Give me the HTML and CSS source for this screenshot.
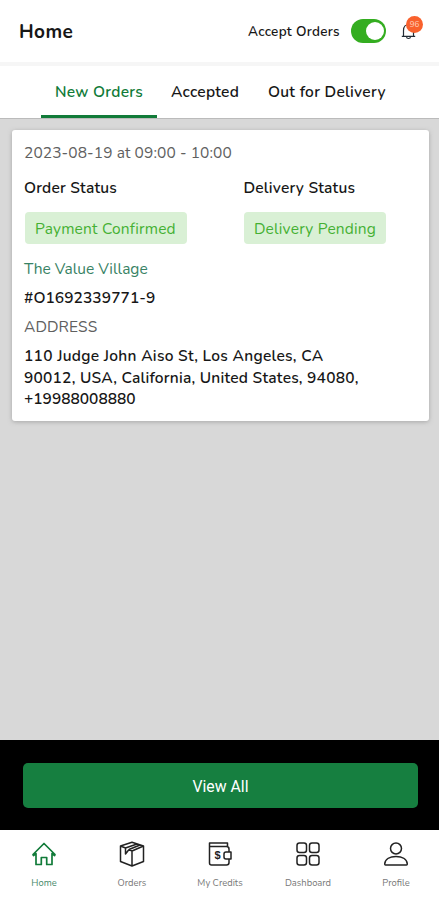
FILE: index.html
```
<!DOCTYPE html>
<html lang="en">
<head>
<meta charset="utf-8">
<meta name="viewport" content="width=device-width, initial-scale=1">
<title>Home</title>
<link rel="stylesheet" href="styles.css">
</head>
<body>
<header class="topbar">
  <h1 class="title">Home</h1>
  <span class="accept">Accept Orders</span>
  <span class="toggle"><span class="knob"></span></span>
  <span class="bell">
    <svg width="16" height="18" viewBox="0 0 16 18" fill="none" stroke="#222c35" stroke-width="1.2"><path d="M.8 14.300h13.400M2.500 14V8.500C2.500 4.500 4.800 2.500 8 2.500s4.500 2 4.500 6V14M5.500 14.700c.2 2.400 3.800 2.400 4 0"/></svg>
    <span class="badge">96</span>
  </span>
</header>
<nav class="tabs">
  <span class="tab tab-active">New Orders</span>
  <span class="tab t-accepted">Accepted</span>
  <span class="tab t-out">Out for Delivery</span>
</nav>
<main class="content">
  <article class="card">
    <div class="date">2023-08-19 at 09:00 - 10:00</div>
    <div class="statuses">
      <div><div class="label">Order Status</div><span class="chip c-payment">Payment Confirmed</span></div>
      <div><div class="label">Delivery Status</div><span class="chip c-pending">Delivery Pending</span></div>
    </div>
    <div class="store">The Value Village</div>
    <div class="number">#O1692339771-9</div>
    <div class="heading">ADDRESS</div>
    <div class="address"><span class="street">110 Judge John Aiso St, Los Angeles, CA</span><br><span class="region">90012, USA, California, United States, 94080,</span><br><span>+19988008880</span></div>
  </article>
</main>
<div class="action"><button class="view">View All</button></div>
<footer class="nav">
  <div class="item item-active">
    <svg width="26" height="26" viewBox="0 0 26 26"><path d="M5 12.500 2.500 14.500 2 13.500 13 2.500 24 13.500l-.5 1L21 12.500v11h-5.300v-7h-5.400v7H5z"/></svg>
    <span>Home</span>
  </div>
  <div class="item">
    <svg width="26" height="26" viewBox="0 0 26 26"><path d="M13 1.200 24.500 5v15.500L13 25 1.500 20.500V5zM1.500 5l5 2M10 8.500l3 1.500 11.500-5M13 10v15M6.500 7 18 3M10 8.500 21 4M6.500 7v6L10 8.500"/></svg>
    <span>Orders</span>
  </div>
  <div class="item">
    <svg width="26" height="26" viewBox="0 0 26 26"><path d="M20.500 5.500V2H2.500v20q0 2 2 2h15q2.500 0 2.500-2.500V18M2.500 5.500h17q2.500 0 2.500 2.500v3M24 11h-5q-2 0-2 2v3q0 2 2 2h5z"/><text x="7.500" y="18" class="dollar">$</text></svg>
    <span>My Credits</span>
  </div>
  <div class="item">
    <svg width="26" height="26" viewBox="0 0 26 26"><rect x="2" y="2" width="9.500" height="9.500" rx="2.500"/><rect x="14.500" y="2" width="9.500" height="9.500" rx="2.500"/><rect x="2" y="14.500" width="9.500" height="9.500" rx="2.500"/><rect x="14.500" y="14.500" width="9.500" height="9.500" rx="2.500"/></svg>
    <span>Dashboard</span>
  </div>
  <div class="item">
    <svg width="26" height="26" viewBox="0 0 26 26"><circle cx="13" cy="7.500" r="5.500"/><path d="M2.500 24q-.8 0-.8-1C2 18 7 15.500 13 15.500S24 18 24.300 23q0 1-.8 1z"/></svg>
    <span>Profile</span>
  </div>
</footer>
</body>
</html>
```
FILE: styles.css
```
* { box-sizing: border-box; }
body { margin: 0; width: 439px; height: 900px; overflow: hidden; display: flex; flex-direction: column; background: #d8d8d8; font-family: Nunito, Lato, "Noto Sans", sans-serif; font-size: 15.5px; color: #171717; white-space: nowrap; }
.topbar { height: 62px; flex: none; background: #fff; display: flex; align-items: center; padding-left: 19px; }
.title { margin: 2px 0 0; width: 229px; font-size: 19px; font-weight: 700; letter-spacing: .4px; }
.accept { width: 103px; font-size: 13.5px; font-weight: 600; letter-spacing: .3px; }
.toggle { width: 35px; height: 24px; border-radius: 12px; background: #34ad20; padding: 3px 2px; display: flex; justify-content: flex-end; }
.knob { width: 18px; height: 18px; border-radius: 50%; background: #fff; }
.bell { position: relative; margin: 0 0 0 15px; width: 16px; height: 18px; }
.bell svg { display: block; }
.badge { position: absolute; left: 5px; top: -6px; width: 17px; height: 17px; border-radius: 50%; background: #f9612d; color: #ffd0bd; font-size: 8px; line-height: 17px; text-align: center; }
.tabs { height: 57px; flex: none; background: #fff; border-top: 4px solid #f6f6f6; border-bottom: 1px solid #bbb; display: flex; padding-left: 41px; line-height: 51px; font-weight: 600; letter-spacing: .27px; }
.tab-active { width: 116px; padding-left: 14px; margin-right: 14px; color: #117b39; border-bottom: 3px solid #117b39; }
.t-accepted { width: 97px; }
.content { flex: 1; padding: 11px 10px 0 12px; }
.card { height: 291px; border-radius: 3px; background: #fff; box-shadow: 0 1px 4px #8889; padding: 13px 12px; }
.date, .heading { color: #606060; font-weight: 400; line-height: 20px; letter-spacing: .1px; }
.statuses { display: grid; grid-template-columns: 219.5px 1fr; margin-top: 15px; }
.label { font-weight: 600; line-height: 20px; margin-bottom: 14px; letter-spacing: .2px; }
.chip { display: block; height: 32px; line-height: 33px; border-radius: 4px; background: #d9f0d5; color: #45b033; padding-left: 10px; margin-left: 1px; letter-spacing: .2px; }
.c-payment { width: 162px; }
.c-pending { width: 142px; margin-left: .4px; }
.store { color: #388264; line-height: 20px; margin-top: 15px; }
.number { font-weight: 600; line-height: 20px; margin-top: 9px; letter-spacing: .08px; }
.heading { margin-top: 9px; }
.address { font-weight: 600; line-height: 21.7px; margin-top: 8px; }
.street { letter-spacing: .29px; }
.region { letter-spacing: .23px; }
.action { height: 90px; flex: none; background: #000; padding: 23px 21px 0 23px; }
.view { display: block; width: 395px; height: 45px; border: 0; border-radius: 5px; background: #167f40; color: #fff; font: 400 15.8px/20px Roboto, sans-serif; padding: 2px 0 0; }
.nav { height: 70px; flex: none; background: #fff; display: grid; grid-template-columns: repeat(5, 88px); }
.item { display: flex; flex-direction: column; align-items: center; padding-top: 11px; font-size: 9.4px; color: #777; }
.item svg { fill: none; stroke: #222; stroke-width: 1.5; stroke-linejoin: round; }
.item span { margin-top: 10px; line-height: 12px; }
.item-active { color: #45896a; }
.item-active svg { stroke: #117b39; stroke-width: 1.7; }
.item .dollar { font: 700 11px "Liberation Sans", sans-serif; fill: #222; stroke: none; }
```
